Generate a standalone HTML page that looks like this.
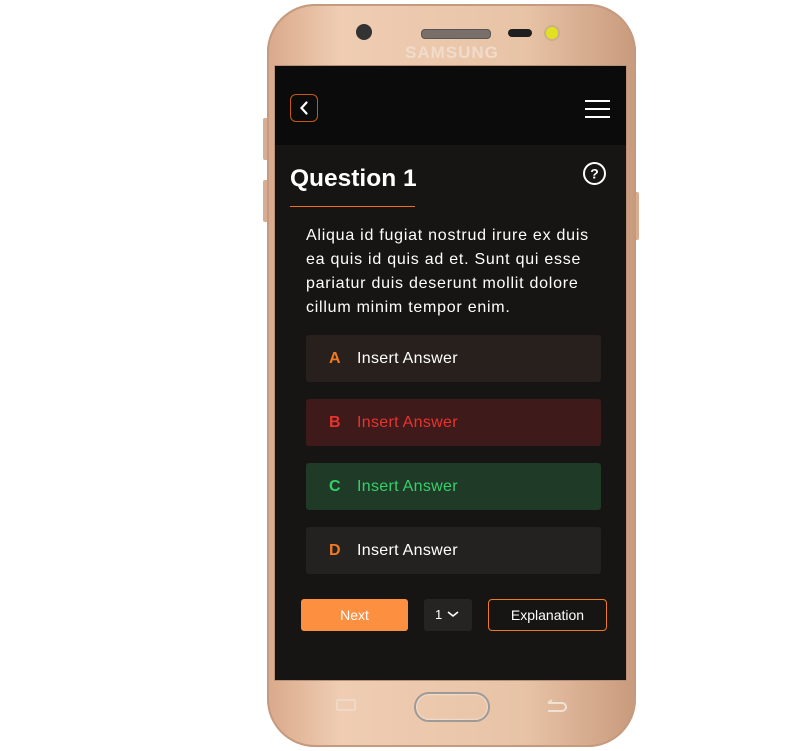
<!DOCTYPE html>
<html><head><style>
body{margin:0;width:789px;height:751px;background:#fff;position:relative;overflow:hidden;font-family:"Liberation Sans",sans-serif}
.phone{position:absolute;left:267px;top:4px;width:369px;height:743px;border-radius:48px;background:linear-gradient(90deg,#d9a98a,#efcdb3 20%,#e8c3a6 70%,#c99a7d);box-shadow:inset 0 0 0 2px #c59a7e}
.btn{position:absolute;background:#d8ae92;border-radius:2px}
.screen{position:absolute;left:275px;top:66px;width:351px;height:614px;background:#161514;overflow:hidden;box-shadow:0 0 0 1px #b89078}
.hdr{position:absolute;left:0;top:0;width:351px;height:79px;background:#0c0b0b}
.abs{position:absolute}
.ans{position:absolute;left:31px;width:295px;height:47px;border-radius:3px;font-size:16px;line-height:47px;letter-spacing:0.3px}
.ans b{position:absolute;left:23px;font-weight:bold}
.ans span{position:absolute;left:51px}
</style></head><body>
<div class="btn" style="left:263px;top:118px;width:6px;height:42px"></div>
<div class="btn" style="left:263px;top:180px;width:6px;height:42px"></div>
<div class="btn" style="left:634px;top:192px;width:5px;height:48px"></div>
<div class="phone"></div>
<div class="abs" style="left:356px;top:24px;width:16px;height:16px;border-radius:50%;background:#333"></div>
<div class="abs" style="left:421px;top:29px;width:68px;height:8px;border-radius:4px;background:#7a6e68;border:1px solid #555"></div>
<div class="abs" style="left:508px;top:29px;width:24px;height:8px;border-radius:4px;background:#1f1f1f"></div>
<div class="abs" style="left:546px;top:27px;width:12px;height:12px;border-radius:50%;background:#e3e021;box-shadow:0 0 0 2px #c9b08a"></div>
<div class="abs" style="left:405px;top:43px;font-size:17px;font-weight:bold;color:#f1dccb;letter-spacing:1px">SAMSUNG</div>
<div class="screen">
<div class="hdr"></div>
<div class="abs" style="left:15px;top:28px;width:28px;height:28px;border:1.5px solid #c45b14;border-radius:6px;box-sizing:border-box"></div>
<svg class="abs" style="left:15px;top:28px" width="28" height="28"><path d="M16.5 8.5l-5 5.5 5 5.5" stroke="#fff" stroke-width="2.2" fill="none" stroke-linecap="round"/></svg>
<div class="abs" style="left:310px;top:34px;width:25px;height:2px;background:#fff;box-shadow:0 8px #fff,0 16px #fff"></div>
<div class="abs" style="left:15px;top:99px;font-size:24.5px;font-weight:bold;color:#fff">Question 1</div>
<div class="abs" style="left:15px;top:140px;width:125px;height:1px;background:#f07018"></div>
<svg class="abs" style="left:307px;top:95px" width="25" height="25"><circle cx="12.5" cy="12.5" r="10.5" stroke="#fff" stroke-width="2" fill="none"/><text x="12.5" y="17.5" text-anchor="middle" font-size="14" font-weight="bold" fill="#fff" font-family="Liberation Sans">?</text></svg>
<div class="abs" style="left:31px;top:158px;width:300px;font-size:16px;line-height:24px;color:#fff;letter-spacing:0.75px">Aliqua id fugiat nostrud irure ex duis ea quis id quis ad et. Sunt qui esse pariatur duis deserunt mollit dolore cillum minim tempor enim.</div>
<div class="ans" style="top:269px;background:#27201d;color:#fff"><b style="color:#f07a22">A</b><span>Insert Answer</span></div>
<div class="ans" style="top:333px;background:#3f1a1a;color:#e8332f"><b>B</b><span>Insert Answer</span></div>
<div class="ans" style="top:397px;background:#1f3b27;color:#35d06a"><b>C</b><span>Insert Answer</span></div>
<div class="ans" style="top:461px;background:#242220;color:#fff"><b style="color:#f07a22">D</b><span>Insert Answer</span></div>
<div class="abs" style="left:26px;top:533px;width:107px;height:32px;border-radius:3px;background:#fd8f41;color:#fff;font-size:14px;line-height:32px;text-align:center">Next</div>
<div class="abs" style="left:149px;top:533px;width:48px;height:32px;border-radius:3px;background:#262422;color:#fff;font-size:13px;line-height:32px;padding-left:11px;box-sizing:border-box">1</div>
<svg class="abs" style="left:171px;top:543px" width="14" height="10"><path d="M2 3l5 4 5-4" stroke="#fff" stroke-width="1.6" fill="none"/></svg>
<div class="abs" style="left:213px;top:533px;width:119px;height:32px;border-radius:4px;border:1px solid #f07a22;box-sizing:border-box;color:#fff;font-size:14px;line-height:30px;text-align:center">Explanation</div>
</div>
<div class="abs" style="left:414px;top:692px;width:76px;height:30px;border-radius:15px;border:2px solid #9d9a98;box-sizing:border-box;box-shadow:inset 0 0 2px #fff"></div>
<div class="abs" style="left:336px;top:699px;width:20px;height:12px;border:2px solid #efd9c6;border-radius:2px;box-sizing:border-box"></div>
<svg class="abs" style="left:544px;top:697px" width="24" height="18"><path d="M4 6h14a4 4 0 0 1 0 8H4M4 6l4-3" stroke="#f1e1d3" stroke-width="2" fill="none"/></svg>
</body></html>
